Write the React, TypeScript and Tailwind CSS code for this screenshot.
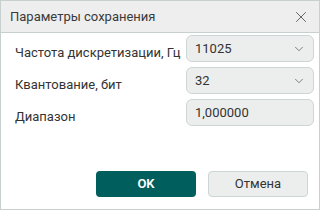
import { X, ChevronDown } from "lucide-react";

const rows = [
  { label: "Частота дискретизации, Гц", value: "11025", select: true },
  { label: "Квантование, бит", value: "32", select: true },
  { label: "Диапазон", value: "1,000000", select: false },
];

export default function App() {
  return (
    <div
      className="flex h-[210px] w-[320px] flex-col border border-[#c8cfcf] bg-white text-[#333333]"
      style={{ fontFamily: "Roboto, 'Noto Sans', sans-serif" }}
    >
      {/* Title bar */}
      <div className="flex h-[32px] shrink-0 items-center justify-between border-b border-[#c8cfcf] bg-[#eeeeee] pl-[9px] pr-[9px]">
        <span className="text-[13px] leading-none text-[#3a3a3a]">Параметры сохранения</span>
        <X className="h-[18px] w-[18px] text-[#555]" strokeWidth={1.2} />
      </div>

      {/* Fields */}
      <div className="flex flex-col gap-[5px] pl-[14px] pr-[5px] pt-[2px]">
        {rows.map((r) => (
          <div key={r.label} className="flex items-start justify-between">
            <span className="whitespace-nowrap pt-[10px] text-[13px] leading-[16px]">{r.label}</span>
            <div className="flex h-[27px] w-[128px] items-center justify-between rounded-[6px] border border-[#cdd6d6] bg-[#eceeee] pl-[8px] pr-[7px]">
              <span className="text-[13px] leading-none">{r.value}</span>
              {r.select && <ChevronDown className="h-[14px] w-[14px] text-[#666]" strokeWidth={1.4} />}
            </div>
          </div>
        ))}
      </div>

      {/* Buttons */}
      <div className="mt-auto flex justify-end gap-[12px] pb-[12px] pr-[11px]">
        <button className="h-[26px] w-[100px] rounded-[4px] bg-[#005e5c] text-[13px] font-semibold text-white">
          OK
        </button>
        <button className="h-[26px] w-[100px] rounded-[4px] border border-[#cdd6d6] bg-[#eceeee] text-[13px] text-[#333]">
          Отмена
        </button>
      </div>
    </div>
  );
}
